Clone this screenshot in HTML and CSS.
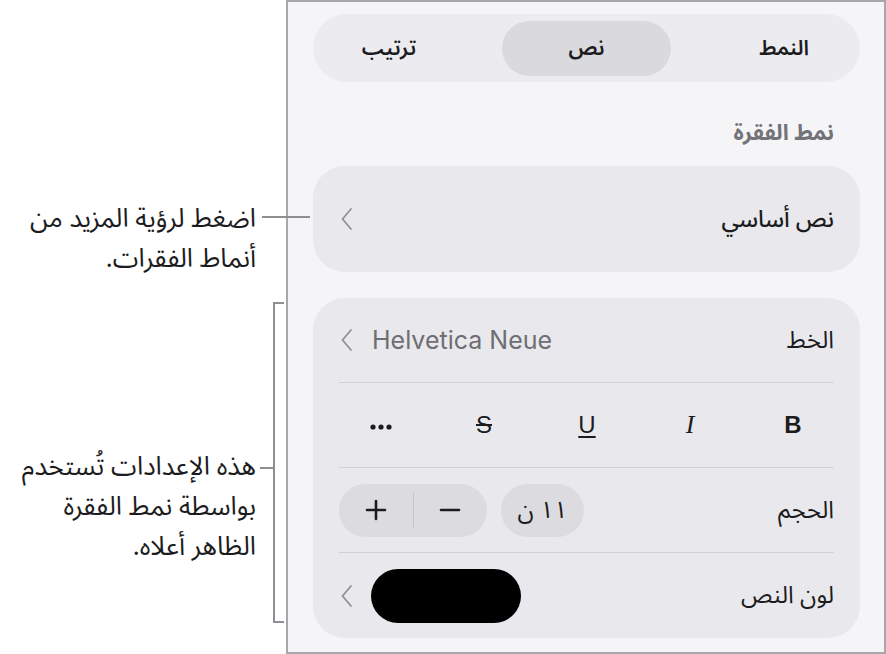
FILE: index.html
```html
<!DOCTYPE html>
<html lang="ar">
  <head>
    <meta charset="UTF-8" />
    <meta name="viewport" content="width=device-width, initial-scale=1.0" />
    <title>نص</title>
    <link rel="stylesheet" href="styles.css">
  </head>
  <body>
    <div class="page">
      <div class="notes" dir="rtl">
        <p class="note note-top">اضغط لرؤية المزيد من<br>أنماط الفقرات.</p>
        <div class="note-group" dir="ltr">
          <p class="note" dir="rtl">هذه الإعدادات تُستخدم<br>بواسطة نمط الفقرة<br>الظاهر أعلاه.</p>
          <div class="bracket"></div>
        </div>
      </div>

      <div class="panel" dir="rtl">
        <div class="tabs">
          <span class="tab">النمط</span>
          <span class="tab active">نص</span>
          <span class="tab">ترتيب</span>
        </div>

        <h2 class="section-title">نمط الفقرة</h2>

        <div class="card style-card">
          <span class="style-name">نص أساسي</span>
          <svg class="chev" width="14" height="24" viewBox="0 0 14 24">
            <path d="M12 2 L3.5 12 L12 22" />
          </svg>
        </div>

        <div class="card settings">
          <div class="row">
            <span class="row-label">الخط</span>
            <span class="font-pick" dir="ltr">
              <svg class="chev" width="14" height="24" viewBox="0 0 14 24">
                <path d="M12 2 L3.5 12 L12 22" />
              </svg>
              <span class="font-name">Helvetica Neue</span>
            </span>
          </div>

          <div class="row format">
            <span class="fmt fmt-b">B</span>
            <span class="fmt fmt-i">I</span>
            <span class="fmt fmt-u">U</span>
            <span class="fmt fmt-s">S</span>
            <span class="fmt">
              <svg width="22" height="6" viewBox="0 0 22 6">
                <circle cx="3" cy="3" r="2.6" />
                <circle cx="11" cy="3" r="2.6" />
                <circle cx="19" cy="3" r="2.6" />
              </svg>
            </span>
          </div>

          <div class="row">
            <span class="row-label">الحجم</span>
            <div class="size-tools">
              <span class="size-value">١١ ن</span>
              <div class="stepper">
                <span class="step">
                  <svg width="22" height="22" viewBox="0 0 22 22"><path d="M2 11 H20" /></svg>
                </span>
                <span class="step-line"></span>
                <span class="step">
                  <svg width="22" height="22" viewBox="0 0 22 22"><path d="M2 11 H20 M11 2 V20" /></svg>
                </span>
              </div>
            </div>
          </div>

          <div class="row">
            <span class="row-label">لون النص</span>
            <div class="color-pick">
              <span class="swatch"></span>
              <svg class="chev" width="14" height="24" viewBox="0 0 14 24">
                <path d="M12 2 L3.5 12 L12 22" />
              </svg>
            </div>
          </div>
        </div>
      </div>
    </div>
  </body>
</html>
```

FILE: styles.css
```css
* {
  margin: 0;
  padding: 0;
  box-sizing: border-box;
}
body {
  background: #fff;
  color: #1c1c1e;
  font-family: "Noto Sans Arabic", "Noto Naskh Arabic", "DejaVu Sans", sans-serif;
}
.page {
  display: flex;
  width: 886px;
  height: 654px;
}

/* callouts on the left */
.notes {
  width: 286px;
  flex-shrink: 0;
  display: flex;
  flex-direction: column;
}
.note {
  font-size: 26px;
  line-height: 40px;
  text-align: right;
  white-space: nowrap;
}
.note-top {
  position: relative;
  margin-top: 199px;
  margin-right: 30px;
}
.note-top::after {
  content: "";
  position: absolute;
  top: 17px;
  left: calc(100% + 6px);
  width: 48px;
  height: 2px;
  background: #8e8e93;
}
.note-group {
  display: flex;
  justify-content: flex-end;
  margin-top: 23px;
  padding-right: 2px;
}
.note-group .note {
  margin-top: 145px;
  margin-right: 17px;
}
.bracket {
  position: relative;
  width: 11px;
  height: 321px;
  border: 2px solid #8e8e93;
  border-right: none;
}
.bracket::before {
  content: "";
  position: absolute;
  top: 163px;
  left: -15px;
  width: 13px;
  height: 2px;
  background: #8e8e93;
}

/* inspector panel */
.panel {
  width: 600px;
  height: 654px;
  flex-shrink: 0;
  background: #f5f5f8;
  border: 2px solid #a7a7ab;
  padding: 12px 24px 0 25px;
}
.tabs {
  display: grid;
  grid-template-columns: 1fr 169px 1fr;
  column-gap: 37px;
  align-items: center;
  height: 68px;
  border-radius: 34px;
  background: #ececf0;
}
.tab {
  text-align: center;
  font-size: 21px;
  font-weight: 600;
}
.tab.active {
  height: 55px;
  line-height: 55px;
  border-radius: 28px;
  background: #d9d9de;
}
.section-title {
  margin: 37px 26px 0 0;
  font-size: 22px;
  line-height: 28px;
  font-weight: 700;
  color: #737378;
}
.card {
  background: #e9e9ed;
  border-radius: 32px;
  padding: 0 26px;
}
.chev {
  fill: none;
  stroke: #8e8e93;
  stroke-width: 1.7;
  stroke-linecap: round;
  stroke-linejoin: round;
  flex-shrink: 0;
}
.style-card {
  display: flex;
  align-items: center;
  justify-content: space-between;
  height: 106px;
  margin-top: 19px;
}
.style-name {
  font-size: 23px;
  font-weight: 500;
}
.settings {
  margin-top: 26px;
}
.row {
  display: flex;
  align-items: center;
  justify-content: space-between;
  height: 85px;
  border-bottom: 1px solid #d1d1d6;
}
.row:last-child {
  border-bottom: none;
}
.row-label {
  font-size: 24px;
}
.font-pick {
  display: flex;
  align-items: center;
  gap: 19px;
}
.font-name {
  font-family: Inter, "Liberation Sans", sans-serif;
  font-size: 25px;
  color: #6e6e73;
}

.format {
  padding: 0 21px 0 22px;
}
.fmt {
  width: 40px;
  text-align: center;
  font-family: "Liberation Sans", sans-serif;
  font-size: 24px;
  color: #1c1c1e;
}
.fmt svg {
  fill: #1c1c1e;
  vertical-align: middle;
}
.fmt-b {
  font-weight: 700;
}
.fmt-i {
  font-family: "Liberation Serif", serif;
  font-style: italic;
  font-size: 26px;
}
.fmt-u {
  text-decoration: underline;
  text-underline-offset: 3px;
}
.fmt-s {
  text-decoration: line-through;
}

.size-tools {
  display: flex;
  align-items: center;
  gap: 14px;
}
.size-value {
  width: 83px;
  height: 53px;
  line-height: 53px;
  text-align: center;
  border-radius: 27px;
  background: #dcdce0;
  font-size: 24px;
}
.stepper {
  display: flex;
  align-items: center;
  width: 148px;
  height: 53px;
  border-radius: 27px;
  background: #dcdce0;
}
.step {
  flex: 1;
  display: flex;
  justify-content: center;
}
.step svg {
  fill: none;
  stroke: #1c1c1e;
  stroke-width: 2.6;
  stroke-linecap: round;
}
.step-line {
  width: 1px;
  height: 36px;
  background: #c4c4c9;
}
.color-pick {
  display: flex;
  align-items: center;
  gap: 18px;
}
.swatch {
  width: 150px;
  height: 54px;
  border-radius: 27px;
  background: #000;
}
```
